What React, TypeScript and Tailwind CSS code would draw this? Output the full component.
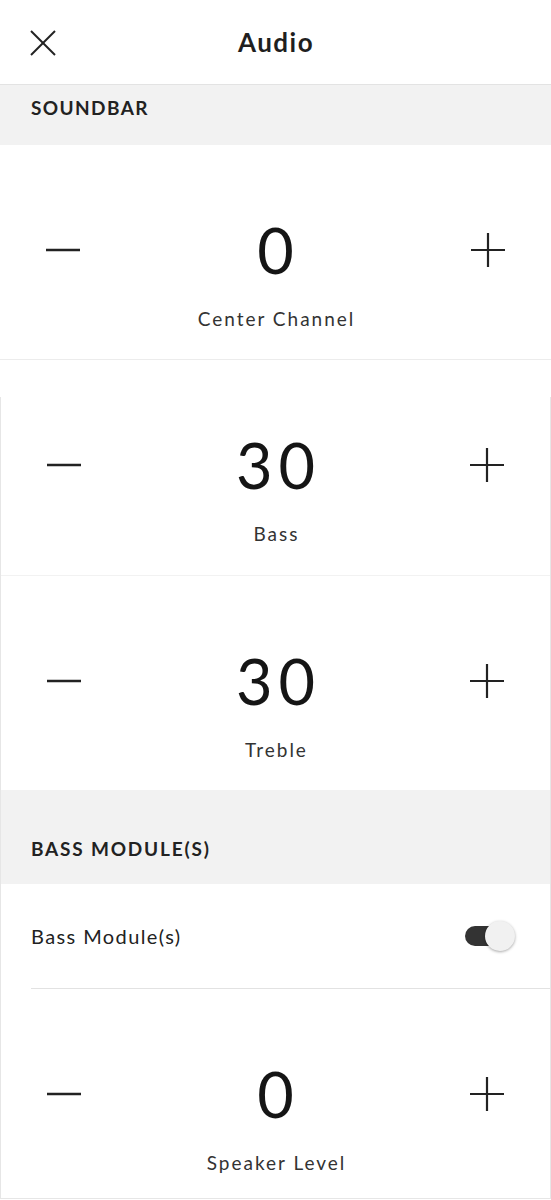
import { useState } from "react";

function MinusIcon() {
  return (
    <svg width="34" height="34" viewBox="0 0 34 34" fill="none">
      <line x1="0" y1="17" x2="34" y2="17" stroke="#222" strokeWidth="2.6" />
    </svg>
  );
}

function PlusIcon() {
  return (
    <svg width="34" height="34" viewBox="0 0 34 34" fill="none">
      <line x1="0" y1="17" x2="34" y2="17" stroke="#222" strokeWidth="2.2" />
      <line x1="17" y1="0" x2="17" y2="34" stroke="#222" strokeWidth="2.2" />
    </svg>
  );
}

function Stepper({
  label,
  initial,
  top,
  border,
}: {
  label: string;
  initial: number;
  top: string;
  border: string;
}) {
  const [value, setValue] = useState(initial);

  return (
    <div className={`flex flex-col ${top} ${border}`}>
      <div className="grid grid-cols-[34px_1fr_34px] items-center px-[46px] h-[62px]">
        <button onClick={() => setValue(value - 1)} className="flex items-center">
          <MinusIcon />
        </button>
        <div className="pl-[6px] text-center text-[63px] font-normal leading-[62px] text-[#151515] tracking-[6px]">
          {value}
        </div>
        <button onClick={() => setValue(value + 1)} className="flex items-center">
          <PlusIcon />
        </button>
      </div>
      <div className="mt-[26px] pl-[2px] text-center text-[19px] leading-[24px] tracking-[2px] text-[#333]">
        {label}
      </div>
    </div>
  );
}

export default function App() {
  const [bassOn, setBassOn] = useState(true);

  return (
    <main className="w-[551px] bg-white font-['Lato',sans-serif]">
      <header className="relative flex h-[85px] items-center justify-center border-b border-[#e3e3e3]">
        <button className="absolute left-[30px] top-[30px]">
          <svg width="26" height="26" viewBox="0 0 26 26" fill="none">
            <line x1="1" y1="1" x2="25" y2="25" stroke="#222" strokeWidth="2" />
            <line x1="25" y1="1" x2="1" y2="25" stroke="#222" strokeWidth="2" />
          </svg>
        </button>
        <h1 className="pl-[1px] text-[26px] font-bold tracking-[1.5px] text-[#1f1f1f]">Audio</h1>
      </header>

      <div className="flex h-[60px] items-start bg-[#f2f2f2] px-[31px] pt-[9px]">
        <h2 className="text-[19px] font-bold tracking-[1.4px] text-[#222]">SOUNDBAR</h2>
      </div>

      <Stepper
        label="Center Channel"
        initial={0}
        top="pt-[74px] h-[215px]"
        border="border-b border-[#ececec]"
      />

      <div className="h-[37px]" />

      <div className="border-x border-b border-[#e6e6e6]">
        <Stepper
          label="Bass"
          initial={30}
          top="pt-[37px] h-[179px]"
          border="border-b border-[#f2f2f2]"
        />
        <Stepper label="Treble" initial={30} top="pt-[74px] h-[214px]" border="" />

        <div className="flex h-[94px] items-end bg-[#f2f2f2] px-[30px] pb-[21px]">
          <h2 className="text-[19px] font-bold tracking-[1.8px] text-[#222]">BASS MODULE(S)</h2>
        </div>

        <div className="flex h-[104px] items-center justify-between pl-[30px] pr-[33px]">
          <span className="text-[20px] tracking-[1.4px] text-[#222]">Bass Module(s)</span>
          <button
            onClick={() => setBassOn(!bassOn)}
            className="relative h-[30px] w-[52px]"
          >
            <span
              className={`absolute left-0 top-[5px] h-[20px] w-[42px] rounded-full ${
                bassOn ? "bg-[#333]" : "bg-[#bbb]"
              }`}
            />
            <span
              className={`absolute top-0 h-[30px] w-[30px] rounded-full bg-[#f1f1f1] shadow-[0_1px_3px_rgba(0,0,0,0.35)] ${
                bassOn ? "left-[20px]" : "left-0"
              }`}
            />
          </button>
        </div>

        <div className="ml-[30px] border-t border-[#e2e2e2]" />

        <Stepper label="Speaker Level" initial={0} top="pt-[74px] h-[209px]" border="" />
      </div>
    </main>
  );
}
